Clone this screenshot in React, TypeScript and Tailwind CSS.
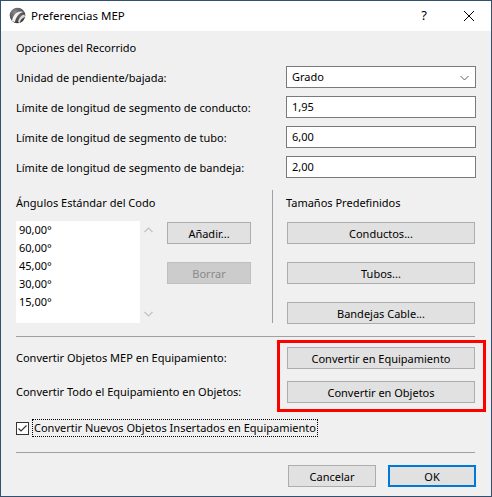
import React from "react";

const font = { fontFamily: '"Noto Sans", "Segoe UI", sans-serif' };

function Btn({ children, w, disabled, primary }: { children: React.ReactNode; w: string; disabled?: boolean; primary?: boolean }) {
  const base = "h-[22px] flex items-center justify-center text-[11px] leading-none";
  let cls = "bg-[#e1e1e1] border border-[#adadad] text-black";
  if (disabled) cls = "bg-[#cccccc] border border-[#bfbfbf] text-[#8a8a8a]";
  if (primary) cls = "bg-[#e1e1e1] border-2 border-[#0078d7] text-black";
  return <div className={`${base} ${cls} ${w}`}>{children}</div>;
}

function Field({ label, value, select }: { label: string; value: string; select?: boolean }) {
  return (
    <div className="flex items-center h-[22px]">
      <div className="w-[270px] text-[11px] leading-none">{label}</div>
      <div className="w-[190px] h-[22px] bg-white border border-[#7a7a7a] flex items-center pl-[5px] pr-[6px] text-[11px]">
        <span className="flex-1">{value}</span>
        {select && (
          <svg width="9" height="6" viewBox="0 0 9 6" className="mt-[1px]">
            <path d="M0.5 1 L4.5 5 L8.5 1" fill="none" stroke="#606060" strokeWidth="1" />
          </svg>
        )}
      </div>
    </div>
  );
}

function Logo() {
  return (
    <svg width="17" height="17" viewBox="0 0 17 17">
      <defs>
        <radialGradient id="lg" cx="0.35" cy="0.3" r="0.8">
          <stop offset="0" stopColor="#8a8a8a" />
          <stop offset="1" stopColor="#2d2d2d" />
        </radialGradient>
      </defs>
      <circle cx="8.5" cy="8.5" r="7.8" fill="url(#lg)" />
      <path d="M3 14 C4 7 9 3 15 5 C11 5 7 9 6 15 Z" fill="#f4f4f4" />
      <path d="M9 15 C10 11 12 8 15.5 7.5 L16 10 C13 11 11 13 11 16 Z" fill="#d8d8d8" />
    </svg>
  );
}

export default function App() {
  const angles = ["90,00°", "60,00°", "45,00°", "30,00°", "15,00°"];
  return (
    <div style={font} className="relative w-[492px] h-[497px] border border-[#34506f] bg-[#f0f0f0] flex flex-col text-black">
      {/* title bar */}
      <div className="h-[30px] bg-white flex items-center shrink-0">
        <div className="ml-[8px] mt-[-1px]">
          <Logo />
        </div>
        <div className="ml-[5px] text-[11.5px]">Preferencias MEP</div>
        <div className="flex-1" />
        <div className="text-[13px] mr-[36px] mt-[-1px]">?</div>
        <svg width="12" height="12" viewBox="0 0 12 12" className="mr-[16px]">
          <path d="M1 1 L11 11 M11 1 L1 11" stroke="#000" strokeWidth="1" />
        </svg>
      </div>

      <div className="px-[15px] flex flex-col">
        <div className="mt-[9px] h-[16px] text-[11px] leading-[16px]">Opciones del Recorrido</div>
        <div className="mt-[10px] flex flex-col gap-[8px]">
          <Field label="Unidad de pendiente/bajada:" value="Grado" select />
          <Field label="Límite de longitud de segmento de conducto:" value="1,95" />
          <Field label="Límite de longitud de segmento de tubo:" value="6,00" />
          <Field label="Límite de longitud de segmento de bandeja:" value="2,00" />
        </div>

        {/* angles and predefined sizes */}
        <div className="mt-[12px] flex">
          <div className="w-[256px] pt-[5px]">
            <div className="h-[16px] text-[11px] leading-[16px]">Ángulos Estándar del Codo</div>
            <div className="mt-[10px] flex">
              <div className="w-[124px] h-[102px] bg-white pl-[3px] pt-[1px] flex flex-col">
                {angles.map((a) => (
                  <div key={a} className="h-[18px] text-[11px] leading-[16px]">{a}</div>
                ))}
              </div>
              <div className="w-[17px] flex flex-col items-center justify-between pt-[6px] pb-[6px]">
                <svg width="9" height="6" viewBox="0 0 9 6">
                  <path d="M0.5 5 L4.5 1 L8.5 5" fill="none" stroke="#c2c2c2" strokeWidth="1.2" />
                </svg>
                <svg width="9" height="6" viewBox="0 0 9 6">
                  <path d="M0.5 1 L4.5 5 L8.5 1" fill="none" stroke="#c2c2c2" strokeWidth="1.2" />
                </svg>
              </div>
              <div className="ml-[10px] flex flex-col gap-[18px] pt-[1px]">
                <Btn w="w-[84px]">Añadir...</Btn>
                <Btn w="w-[84px]" disabled>Borrar</Btn>
              </div>
            </div>
          </div>
          <div className="w-px bg-[#a0a0a0] h-[133px]" />
          <div className="ml-[13px] w-[190px] pt-[5px]">
            <div className="h-[16px] text-[11px] leading-[16px]">Tamaños Predefinidos</div>
            <div className="mt-[11px] flex flex-col gap-[18px] pl-[1px]">
              <Btn w="w-[188px]">Conductos...</Btn>
              <Btn w="w-[188px]">Tubos...</Btn>
              <Btn w="w-[188px]">Bandejas Cable...</Btn>
            </div>
          </div>
        </div>

        <div className="mt-[12px] h-px bg-[#a0a0a0] w-[459px]" />

        <div className="mt-[10px] flex flex-col gap-[12px]">
          <div className="flex items-center">
            <div className="w-[271px] text-[11px]">Convertir Objetos MEP en Equipamiento:</div>
            <Btn w="w-[188px]">Convertir en Equipamiento</Btn>
          </div>
          <div className="flex items-center">
            <div className="w-[271px] text-[11px]">Convertir Todo el Equipamiento en Objetos:</div>
            <Btn w="w-[188px]">Convertir en Objetos</Btn>
          </div>
        </div>

        <div className="mt-[16px] flex items-center">
          <div className="w-[13px] h-[13px] bg-white border border-[#333] flex items-center justify-center">
            <svg width="11" height="11" viewBox="0 0 11 11">
              <path d="M1.5 5.5 L4 8 L9.5 2.5" fill="none" stroke="#333" strokeWidth="1.2" />
            </svg>
          </div>
          <div className="ml-[3px] border border-dotted border-black text-[11px] leading-[16px] px-[1px]">
            Convertir Nuevos Objetos Insertados en Equipamiento
          </div>
        </div>

        <div className="mt-[15px] h-px bg-[#a0a0a0] w-[459px]" />

        <div className="mt-[12px] flex justify-end gap-[12px]">
          <Btn w="w-[88px]">Cancelar</Btn>
          <Btn w="w-[88px]" primary>OK</Btn>
        </div>
      </div>

      {/* highlight around the conversion buttons */}
      <div className="absolute left-[276px] top-[339px] w-[209px] h-[72px] border-[3px] border-[#ff0000]" />
    </div>
  );
}
